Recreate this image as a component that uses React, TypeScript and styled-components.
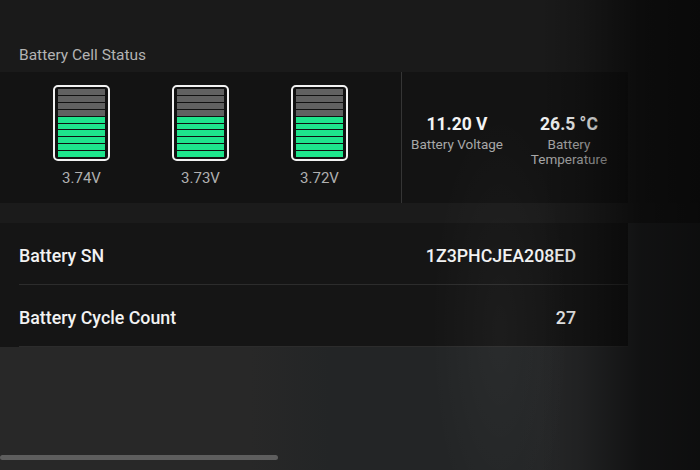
import React from 'react'
import styled, { createGlobalStyle } from 'styled-components'

const GlobalStyle = createGlobalStyle`
  html, body {
    margin: 0;
    padding: 0;
    background: #0e0e0e;
  }
  body {
    font-family: Roboto, "Liberation Sans", sans-serif;
    -webkit-font-smoothing: antialiased;
  }
`

const Page = styled.div`
  position: relative;
  width: 700px;
  height: 470px;
  overflow: hidden;
  display: flex;
  flex-direction: column;
  background: linear-gradient(90deg, #282828 0, #282828 250px, #232526 330px, #232526 520px, #262728 560px);
`

const Top = styled.div`
  background: #1a1a1a;
  display: flex;
  flex-direction: column;
`

const Title = styled.h5`
  margin: 0;
  height: 72px;
  box-sizing: border-box;
  padding: 0 19px 8px;
  display: flex;
  align-items: flex-end;
  font-size: 15.5px;
  font-weight: 400;
  color: #b3b3b3;
`

const CellPanel = styled.section`
  width: 628px;
  height: 131px;
  background: #131313;
  display: flex;
`

const Cells = styled.div`
  width: 402px;
  box-sizing: border-box;
  border-right: 1px solid #353535;
  display: flex;
  gap: 62px;
  padding: 13px 0 0 53px;
`

const Cell = styled.div`
  width: 57px;
  display: flex;
  flex-direction: column;
  align-items: center;
`

const Battery = styled.div`
  width: 57px;
  height: 76px;
  box-sizing: border-box;
  border: 2px solid #f2f2f2;
  border-radius: 5px;
  padding: 2px 3px;
  background: #111;
  display: flex;
  flex-direction: column;
  gap: 1px;
`

const Segment = styled.div<{ $on: boolean }>`
  flex: 1;
  background: ${p => (p.$on ? '#1ee58c' : '#616161')};
`

const CellLabel = styled.span`
  margin-top: 8px;
  font-size: 15px;
  line-height: 18px;
  color: #b0b0b0;
`

const Stats = styled.div`
  flex: 1;
  display: flex;
  gap: 12px;
  padding: 42px 0 0 5px;
`

const Stat = styled.div`
  width: 100px;
  display: flex;
  flex-direction: column;
  align-items: center;
  text-align: center;
`

const StatValue = styled.span`
  font-size: 17.5px;
  font-weight: 700;
  line-height: 20px;
  color: #f4f4f4;
`

const StatLabel = styled.span`
  width: 96px;
  margin-top: 3px;
  font-size: 13.5px;
  line-height: 15px;
  color: #a8a8a8;
`

const Spacer = styled.div`
  height: 20px;
  background: #1b1b1b;
`

const Rows = styled.section`
  width: 628px;
  background: #151515;
`

const Row = styled.div`
  height: 62px;
  margin-left: 19px;
  padding: 3px 52px 0 0;
  box-sizing: border-box;
  border-bottom: 1px solid #2c2c2c;
  display: flex;
  align-items: center;
  justify-content: space-between;
  font-size: 17.8px;
  font-weight: 500;
  color: #f2f2f2;
`

const Bottom = styled.div`
  flex: 1;
  display: flex;
  align-items: flex-end;
  padding-bottom: 10px;
`

const ScrollThumb = styled.div`
  width: 278px;
  height: 5px;
  border-radius: 3px;
  background: #5e5e5e;
`

const Shade = styled.div`
  position: absolute;
  inset: 0;
  pointer-events: none;
  background:
    radial-gradient(ellipse 70px 220px at 500px 330px, rgba(255, 255, 255, 0.03), transparent),
    linear-gradient(90deg, transparent 0, transparent 540px, rgba(0, 0, 0, 0.15) 580px, rgba(0, 0, 0, 0.55) 640px, rgba(0, 0, 0, 0.65) 700px);
`

const cells = ['3.74V', '3.73V', '3.72V']

export default function App() {
  return (
    <Page>
      <GlobalStyle />
      <Top>
        <Title>Battery Cell Status</Title>
        <CellPanel>
          <Cells>
            {cells.map(v => (
              <Cell key={v}>
                <Battery>
                  {Array.from({ length: 10 }, (_, i) => (
                    <Segment key={i} $on={i >= 4} />
                  ))}
                </Battery>
                <CellLabel>{v}</CellLabel>
              </Cell>
            ))}
          </Cells>
          <Stats>
            <Stat>
              <StatValue>11.20 V</StatValue>
              <StatLabel>Battery Voltage</StatLabel>
            </Stat>
            <Stat>
              <StatValue>26.5 °C</StatValue>
              <StatLabel>Battery Temperature</StatLabel>
            </Stat>
          </Stats>
        </CellPanel>
        <Spacer />
      </Top>
      <Rows>
        <Row>
          <span>Battery SN</span>
          <span>1Z3PHCJEA208ED</span>
        </Row>
        <Row>
          <span>Battery Cycle Count</span>
          <span>27</span>
        </Row>
      </Rows>
      <Bottom>
        <ScrollThumb />
      </Bottom>
      <Shade />
    </Page>
  )
}
